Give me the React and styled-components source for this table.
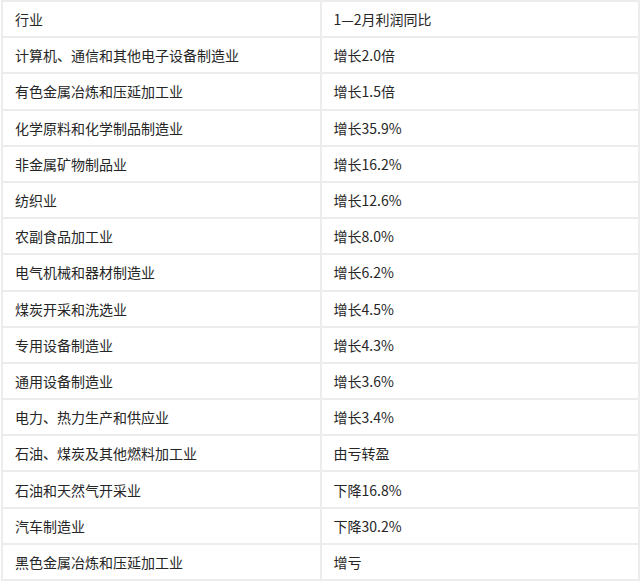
import React from 'react'
import styled, { createGlobalStyle } from 'styled-components'

const GlobalStyle = createGlobalStyle`
  html, body {
    margin: 0;
    padding: 0;
    background: #fff;
  }
  body {
    font-family: "Noto Sans CJK SC", "Noto Sans", sans-serif;
  }
`

const rows = [
  ['计算机、通信和其他电子设备制造业', '增长2.0倍'],
  ['有色金属冶炼和压延加工业', '增长1.5倍'],
  ['化学原料和化学制品制造业', '增长35.9%'],
  ['非金属矿物制品业', '增长16.2%'],
  ['纺织业', '增长12.6%'],
  ['农副食品加工业', '增长8.0%'],
  ['电气机械和器材制造业', '增长6.2%'],
  ['煤炭开采和洗选业', '增长4.5%'],
  ['专用设备制造业', '增长4.3%'],
  ['通用设备制造业', '增长3.6%'],
  ['电力、热力生产和供应业', '增长3.4%'],
  ['石油、煤炭及其他燃料加工业', '由亏转盈'],
  ['石油和天然气开采业', '下降16.8%'],
  ['汽车制造业', '下降30.2%'],
  ['黑色金属冶炼和压延加工业', '增亏']
]

export default function App() {
  return (
    <>
      <GlobalStyle />
      <Table>
        <tbody>
          <Row>
            <Cell>行业</Cell>
            <Cell>1—2月利润同比</Cell>
          </Row>
          {rows.map(([name, value]) => (
            <Row key={name}>
              <Cell>{name}</Cell>
              <Cell>{value}</Cell>
            </Row>
          ))}
        </tbody>
      </Table>
    </>
  )
}

const Table = styled.table`
  width: 639px;
  margin-left: 1px;
  border-collapse: collapse;
  table-layout: fixed;
  color: #262626;
  font-size: 14px;
`

const Row = styled.tr`
  height: 36.2px;
`

const Cell = styled.td`
  width: 50%;
  padding: 0 12px;
  border: 2px solid #ececec;
  vertical-align: middle;
  line-height: 20px;
`
